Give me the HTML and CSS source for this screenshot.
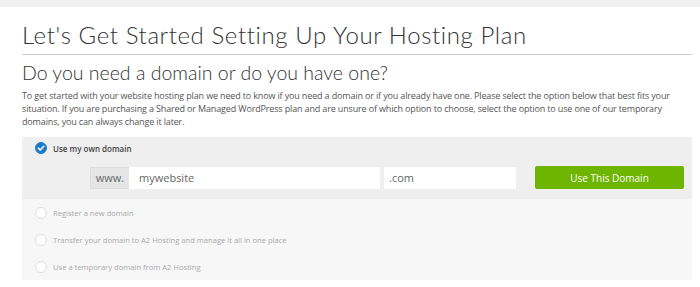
FILE: index.html
```html
<!DOCTYPE html>
<html lang="en">
<head>
    <meta charset="UTF-8">
    <title>Hosting Plan Setup</title>
    <link rel="stylesheet" href="styles.css">
</head>
<body>
    <div class="page">
        <h1>Let's Get Started Setting Up Your Hosting Plan</h1>
        <h2>Do you need a domain or do you have one?</h2>
        <p class="intro">To get started with your website hosting plan we need to know if you need a domain or if you already have one. Please select the option below that best fits your situation. If you are purchasing a Shared or Managed WordPress plan and are unsure of which option to choose, select the option to use one of our temporary domains, you can always change it later.</p>

        <div class="options">
            <!-- Opcion seleccionada -->
            <div class="option selected">
                <div class="option-label">
                    <span class="radio checked">
                        <svg viewBox="0 0 12 12" width="12" height="12"><path d="M3.3 6.2 L5.2 8 L8.8 4.3" fill="none" stroke="#fff" stroke-width="1.6" stroke-linecap="round" stroke-linejoin="round"/></svg>
                    </span>
                    Use my own domain
                </div>
                <div class="domain-row">
                    <div class="input-group">
                        <span class="addon">www.</span>
                        <input type="text" class="domain-input" value="mywebsite">
                    </div>
                    <input type="text" class="tld-input" value=".com">
                    <button class="use-btn">Use This Domain</button>
                </div>
            </div>

            <div class="option">
                <div class="option-label"><span class="radio"></span>Register a new domain</div>
            </div>
            <div class="option">
                <div class="option-label"><span class="radio"></span>Transfer your domain to A2 Hosting and manage it all in one place</div>
            </div>
            <div class="option">
                <div class="option-label"><span class="radio"></span>Use a temporary domain from A2 Hosting</div>
            </div>
        </div>
    </div>
</body>
</html>
```

FILE: styles.css
```css
* {
    box-sizing: border-box;
    margin: 0;
    padding: 0;
}

body {
    background: #f0f0f0;
    font-family: 'Open Sans', sans-serif;
    color: #555;
}

.page {
    margin-top: 7px;
    background: #fff;
    height: 280px;
    padding: 0 8px 0 22px;
}

h1 {
    font-family: 'Lato', sans-serif;
    font-weight: 300;
    font-size: 24px;
    letter-spacing: 0.6px;
    line-height: 30px;
    padding-top: 13px;
    padding-bottom: 4px;
    color: #333;
    border-bottom: 1px solid #ccc;
}

h2 {
    font-family: 'Lato', sans-serif;
    font-weight: 300;
    font-size: 19.5px;
    line-height: 24px;
    margin-top: 6px;
    color: #333;
}

.intro {
    font-size: 9px;
    letter-spacing: -0.15px;
    line-height: 13px;
    margin-top: 4px;
    color: #555;
}

.options {
    margin-top: 9px;
    background: #f7f7f7;
}

.option {
    height: 27px;
    padding-left: 13px;
    display: flex;
    align-items: center;
}

.option.selected {
    height: 62px;
    background: #efefef;
    display: block;
    padding-top: 5px;
}

.option-label {
    display: flex;
    align-items: center;
    gap: 6px;
    font-size: 7.6px;
    color: #aaa;
}

.selected .option-label {
    font-size: 8px;
    font-weight: 600;
    color: #444;
}

.radio {
    width: 12px;
    height: 12px;
    border-radius: 50%;
    border: 1px solid #ddd;
    background: #fff;
    display: flex;
}

.radio.checked {
    background: #1f7bc6;
    border-color: #1f7bc6;
}

.radio.checked svg {
    margin: -1px;
}

.domain-row {
    display: flex;
    align-items: center;
    margin-top: 12px;
    margin-left: 55px;
}

.input-group {
    display: flex;
    height: 22px;
}

.addon {
    width: 39px;
    background: #e6e6e6;
    border: 1px solid #ddd;
    border-right: none;
    font-size: 11px;
    color: #666;
    display: flex;
    align-items: center;
    justify-content: center;
}

input {
    font-family: 'Open Sans', sans-serif;
    font-size: 11px;
    color: #666;
    border: none;
    background: #fff;
    height: 22px;
    outline: none;
}

.domain-input {
    width: 251px;
    padding-left: 10px;
}

.tld-input {
    width: 132px;
    margin-left: 4px;
    padding-left: 5px;
}

.use-btn {
    width: 149px;
    height: 23px;
    margin-left: 19px;
    background: #6db500;
    color: #fff;
    border: none;
    border-radius: 2px;
    font-family: 'Open Sans', sans-serif;
    font-size: 10px;
}
```
